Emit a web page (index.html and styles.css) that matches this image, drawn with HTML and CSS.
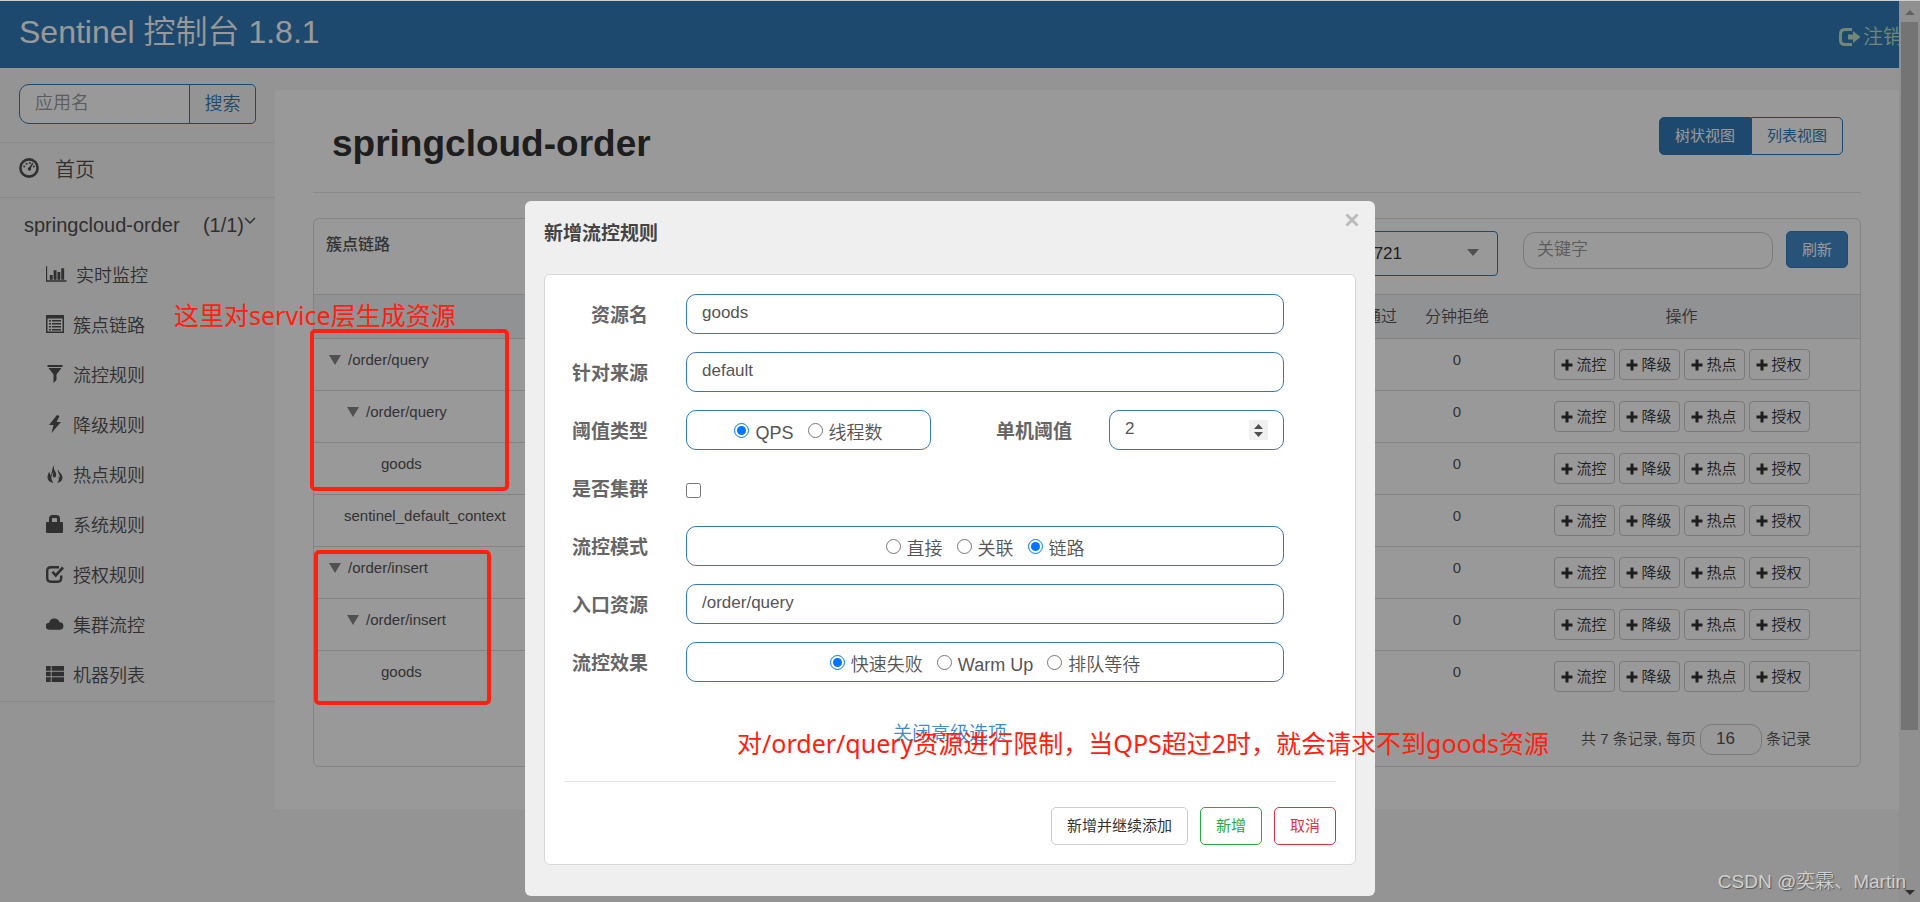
FILE: index.html
```html
<!DOCTYPE html>
<html lang="zh-CN">
<head>
<meta charset="utf-8">
<title>Sentinel 控制台</title>
<link rel="stylesheet" href="styles.css">
</head>
<body>
<svg class="sprite" aria-hidden="true">
  <symbol id="i-plus" viewBox="0 0 12 12"><path d="M4.5 .5h3v4h4v3h-4v4h-3v-4h-4v-3h4z"/></symbol>
  <symbol id="i-tree" viewBox="0 0 12 10"><path d="M0 0h12L6 10z"/></symbol>
  <symbol id="i-dash" viewBox="0 0 20 20"><circle cx="10" cy="10" r="8.6" fill="none" stroke="currentColor" stroke-width="2.6"/><circle cx="5.200" cy="8.600" r="1"/><circle cx="7.500" cy="5.800" r="1"/><circle cx="10.800" cy="4.900" r="1"/><circle cx="14.900" cy="8.600" r="1"/><path d="M13.200 4.800l1.200.6-2.500 4.600a1.700 1.700 0 1 1-1.600-.8z"/></symbol>
  <symbol id="i-stats" viewBox="0 0 22 18"><path d="M0 1h1.200v14.500H21.500V17H0zM4 10h3v5H4zM8 5h3v10H8zM12 7h3v8h-3zM16 3h3v12h-3z"/></symbol>
  <symbol id="i-list" viewBox="0 0 18 18"><path fill-rule="evenodd" d="M0 0h18v18H0zM1.500 3.500v13h15v-13zM3 5h2v1.500H3zM6 5h9v1.500H6zM3 8h2v1.500H3zM6 8h9v1.500H6zM3 11h2v1.500H3zM6 11h9v1.500H6zM3 14h2v1.500H3zM6 14h9v1.500H6z"/></symbol>
  <symbol id="i-filter" viewBox="0 0 18 18"><path d="M1.500 0h15v2H1.500zM2.500 3h13l-5 6.500V15l-3 3V9.500z"/></symbol>
  <symbol id="i-flash" viewBox="0 0 18 18"><path d="M11 0L3 10h4.500l-2 8L15 7h-4.500l3-6z"/></symbol>
  <symbol id="i-fire" viewBox="0 0 18 18"><path d="M8.500 0c-1.500 3 0 5 1 7s1 5.500-1 5.500S6.500 10 7.500 7.500C5 9.500 4.500 14 7.500 18 4 17.500 1.500 15.500 1.500 12c0-2 1-3 1.500-5 1.200 1 1.200 2.500 1.500 3.500C7 7 5 3.500 8.500 0zM12 4c0 3 4.500 4.500 4.500 8.500 0 3-2 5-5.500 5.500 2.500-2.500 2-5 1.300-6.800.9.300 1.400.8 1.700 1.600C14.500 10 11 7.500 12 4z"/></symbol>
  <symbol id="i-lock" viewBox="0 0 18 18"><path fill-rule="evenodd" d="M0 8q0-1 1-1h2V3.500Q3 0 6.500 0h4Q14 0 14 3.500V7h2q1 0 1 1v9q0 1-1 1H1q-1 0-1-1zM6 7h5V4q0-1-1-1H7Q6 3 6 4z"/></symbol>
  <symbol id="i-check" viewBox="0 0 18 18"><path fill="none" stroke="currentColor" stroke-width="2.400" d="M13 2.200H5Q1.200 2.200 1.200 6v7q0 3.700 3.800 3.700h6.500q3.700 0 3.700-3.700v-2.500"/><path d="M5.500 7.500L7.500 6 9.700 8.500 16 1.500l2 2-8.300 9z"/></symbol>
  <symbol id="i-cloud" viewBox="0 0 20 13"><path d="M4 13a4 4 0 0 1-.5-8A6 6 0 0 1 15 4.500a4.300 4.300 0 0 1 1 8.500z"/></symbol>
  <symbol id="i-rows" viewBox="0 0 19 17"><path d="M0 0h5v5H0zM6 0h13v5H6zM0 6h5v5H0zM6 6h13v5H6zM0 12h5v5H0zM6 12h13v5H6z"/></symbol>
  <symbol id="i-out" viewBox="0 0 22 18"><path fill="none" stroke="currentColor" stroke-width="3" d="M13 1.500H6Q1.500 1.500 1.500 6v6q0 4.500 4.500 4.500h7"/><path d="M9 6.500h5V3l7.500 6-7.500 6v-3.500H9z"/></symbol>
</svg>

<div class="window">
  <div class="page">
    <header class="topbar">
      <h1>Sentinel 控制台 1.8.1</h1>
      <a href="#" class="logout"><svg class="ico-out"><use href="#i-out"/></svg>注销</a>
    </header>
    <div class="body">
      <nav class="sidebar">
        <form class="search">
          <input type="text" placeholder="应用名" aria-label="应用名">
          <button type="button">搜索</button>
        </form>
        <a href="#" class="home"><svg class="ico-home"><use href="#i-dash"/></svg>首页</a>
        <a href="#" class="app"><span>springcloud-order</span><span class="count">(1/1)</span><svg class="chev" viewBox="0 0 12 8"><path d="M1 1l5 5 5-5" fill="none" stroke="currentColor" stroke-width="1.500"/></svg></a>
        <ul class="menu">
          <li><a href="#"><svg class="wide"><use href="#i-stats"/></svg>实时监控</a></li>
          <li><a href="#"><svg><use href="#i-list"/></svg>簇点链路</a></li>
          <li><a href="#"><svg><use href="#i-filter"/></svg>流控规则</a></li>
          <li><a href="#"><svg><use href="#i-flash"/></svg>降级规则</a></li>
          <li><a href="#"><svg><use href="#i-fire"/></svg>热点规则</a></li>
          <li><a href="#"><svg><use href="#i-lock"/></svg>系统规则</a></li>
          <li><a href="#"><svg><use href="#i-check"/></svg>授权规则</a></li>
          <li><a href="#"><svg><use href="#i-cloud"/></svg>集群流控</a></li>
          <li><a href="#"><svg><use href="#i-rows"/></svg>机器列表</a></li>
        </ul>
      </nav>
      <main class="main">
        <div class="heading">
          <h2>springcloud-order</h2>
          <div class="views"><button type="button" class="on">树状视图</button><button type="button">列表视图</button></div>
        </div>
        <section class="card">
          <div class="card-head">
            <strong>簇点链路</strong>
            <div class="select-box">
              <select aria-label="机器"><option>192.168.56.1:8721</option></select>
              <svg class="caret" viewBox="0 0 12 7"><path d="M0 0h12L6 7z"/></svg>
            </div>
            <input type="text" class="keyword" placeholder="关键字" aria-label="关键字">
            <button type="button" class="refresh">刷新</button>
          </div>
          <table>
            <colgroup><col><col class="c-num"><col class="c-num"><col class="c-act"></colgroup>
            <thead><tr><th>资源名</th><th>分钟通过</th><th>分钟拒绝</th><th>操作</th></tr></thead>
            <tbody id="rows"></tbody>
          </table>
          <div class="pager">共 7 条记录, <label for="size">每页</label><input id="size" type="text" value="16">条记录</div>
        </section>
      </main>
    </div>
  </div>
  <div class="scrollbar"><svg viewBox="0 0 10 5"><path d="M5 0l5 5H0z"/></svg><div class="thumb"></div><svg class="down" viewBox="0 0 10 5"><path d="M0 0h10L5 5z"/></svg></div>
</div>

<div class="overlay">
  <div class="dialog" role="dialog" aria-labelledby="dlg-title">
    <div class="dialog-head">
      <h3 id="dlg-title">新增流控规则</h3>
      <button type="button" class="close" aria-label="关闭"><svg viewBox="0 0 14 14"><path d="M1.500 1.500l11 11M12.500 1.500l-11 11"/></svg></button>
    </div>
    <form class="panel">
      <div class="fields">
        <label class="name" for="res">资源名</label><input class="box" id="res" type="text" value="goods">
        <label class="name" for="src">针对来源</label><input class="box" id="src" type="text" value="default">
        <span class="name">阈值类型</span>
        <div class="split">
          <div class="box radios"><label><input type="radio" name="grade" checked>QPS</label><label><input type="radio" name="grade">线程数</label></div>
          <label class="name" for="cnt">单机阈值</label>
          <div class="spin"><input class="box" id="cnt" type="number" value="2"><svg viewBox="0 0 19 20"><path fill="#f0f0f0" d="M0 0h19v20H0z"/><path fill="#505050" d="M9.500 4l4.500 5H5zM5 12h9l-4.500 5z"/></svg></div>
        </div>
        <label class="name" for="cluster">是否集群</label><div class="tick"><input type="checkbox" id="cluster"></div>
        <span class="name">流控模式</span>
        <div class="box radios"><label><input type="radio" name="mode">直接</label><label><input type="radio" name="mode">关联</label><label><input type="radio" name="mode" checked>链路</label></div>
        <label class="name" for="entry">入口资源</label><input class="box" id="entry" type="text" value="/order/query">
        <span class="name">流控效果</span>
        <div class="box radios"><label><input type="radio" name="effect" checked>快速失败</label><label><input type="radio" name="effect">Warm Up</label><label><input type="radio" name="effect">排队等待</label></div>
      </div>
      <a href="#" class="advanced">关闭高级选项</a>
      <div class="actions">
        <button type="button">新增并继续添加</button><button type="button" class="ok">新增</button><button type="button" class="cancel">取消</button>
      </div>
    </form>
  </div>
</div>

<div class="mark mark-a"></div>
<div class="mark mark-b"></div>
<p class="note note-a">这里对service层生成资源</p>
<p class="note note-b">对/order/query资源进行限制，当QPS超过2时，就会请求不到goods资源</p>
<p class="watermark">CSDN @奕霖、Martin</p>
<script src="rows.js"></script>
</body>
</html>
```
FILE: styles.css
```css
* { box-sizing: border-box; }
body { margin: 0; height: 100vh; overflow: hidden; border-top: 1px solid #cfcfcf; background: #f7f7f7; color: #555; font: 16px/24px "Liberation Sans", "Noto Sans CJK SC", sans-serif; }
h1, h2, h3, p, ul { margin: 0; padding: 0; }
ul { list-style: none; }
a { color: inherit; text-decoration: none; }
input, button, select { font: inherit; color: inherit; margin: 0; }
button { padding: 0; background: #fff; }
svg { display: block; flex: none; fill: currentColor; }
.sprite { position: absolute; width: 0; height: 0; }

.window { display: flex; height: 100%; }
.page { flex: 1; min-width: 0; overflow: hidden; }
.topbar { display: flex; justify-content: space-between; height: 67px; padding-left: 19px; background: #337ab7; color: #fff; }
.topbar h1 { font-size: 32px; font-weight: 350; line-height: 62px; }
.logout { display: flex; align-items: center; gap: 2px; margin: 4px -4px 0 0; color: #bfe3c4; font-size: 20px; font-weight: 350; }
.ico-out { width: 22px; height: 18px; }

.body { display: flex; align-items: flex-start; }
.sidebar { width: 275px; flex: none; border-bottom: 1px solid #e7e7e7; color: #505050; }
.search { display: flex; padding: 16px 19px 18px; border-bottom: 1px solid #e7e7e7; font-size: 18px; font-weight: 350; }
.search input { flex: 1; min-width: 0; height: 40px; padding: 0 15px 2px; border: 1px solid #337ab7; border-radius: 10px 0 0 10px; background: #fff; }
.search button { width: 67px; margin-left: -1px; border: 1px solid #337ab7; border-radius: 0 5px 5px 0; color: #337ab7; background: none; }
::placeholder { color: #999; opacity: 1; font-weight: 350; }
.home { display: flex; align-items: center; gap: 16px; height: 55px; padding-left: 19px; border-bottom: 1px solid #e7e7e7; font-size: 20px; font-weight: 350; }
.ico-home { width: 20px; height: 20px; margin-bottom: 4px; }
.app { display: flex; align-items: center; height: 53px; padding: 0 19px 0 24px; font-size: 20px; }
.count { margin-left: auto; }
.chev { width: 12px; height: 8px; margin-bottom: 8px; }
.menu a { display: flex; align-items: center; gap: 9px; height: 50px; padding-left: 46px; font-size: 18px; font-weight: 350; }
.menu svg { width: 18px; height: 18px; margin-bottom: 4px; }
.menu .wide { width: 21px; }

.main { flex: 1; min-width: 0; margin-top: 22px; padding: 0 38px 42px; background: #fff; }
.heading { display: flex; justify-content: space-between; align-items: flex-start; height: 103px; padding: 27px 18px 0 19px; border-bottom: 1px solid #e7e7e7; }
.heading h2 { color: #333; font-size: 37px; line-height: 54px; }
.views { display: flex; font-size: 15px; }
.views button { width: 92px; height: 38px; border: 1px solid #337ab7; color: #337ab7; border-radius: 0 5px 5px 0; }
.views .on { background: #337ab7; color: #fff; border-radius: 5px 0 0 5px; }

.card { margin-top: 25px; border: 1px solid #dadada; border-radius: 6px; }
.card-head { display: flex; align-items: flex-start; height: 75px; padding: 12px; }
.card-head strong { flex: 1; font-size: 16px; line-height: 28px; font-weight: 500; }
.select-box { position: relative; width: 260px; margin-right: 25px; }
.select-box select { width: 100%; height: 45px; padding: 0 95px 0 0; appearance: none; text-align: right; text-align-last: right; border: 1px solid #337ab7; border-radius: 4px; background: #fff; color: #333; font-size: 17px; }
.caret { position: absolute; right: 19px; top: 18px; width: 12px; height: 7px; fill: #888; }
.keyword { width: 250px; height: 37px; margin: 1px 13px 0 0; padding: 0 13px 2px; border: 1px solid #ccc; border-radius: 12px; background: #fff; font-size: 17px; }
.refresh { width: 62px; height: 37px; border: 1px solid #357ebd; border-radius: 5px; background: #428bca; color: #fff; font-size: 15px; }
table { width: 100%; border-collapse: collapse; table-layout: fixed; font-size: 15px; }
.c-num { width: 92px; }
.c-act { width: 357px; }
th { height: 44px; padding: 0; border: solid #dadada; border-width: 1px 0; background: #f1f3f6; font-size: 16px; font-weight: 350; }
td { height: 52px; padding: 10px 0; vertical-align: top; text-align: center; border-bottom: 1px solid #dadada; line-height: 22px; }
tbody tr:last-child td { border-bottom: 0; }
td:first-child { text-align: left; }
.node { display: flex; align-items: center; gap: 7px; padding-left: 15px; }
.node svg { width: 12px; height: 10px; fill: #888; }
.depth-1 { padding-left: 33px; }
.plain-0 { padding-left: 30px; }
.plain-2 { padding-left: 67px; }
.ops { display: flex; justify-content: center; gap: 4px; }
.ops button { display: flex; align-items: center; justify-content: center; gap: 3px; width: 61px; height: 31px; border: 1px solid #ccc; border-radius: 4px; color: #333; font-size: 15px; font-weight: 350; }
.ops svg { width: 12px; height: 12px; }
.pager { display: flex; align-items: center; justify-content: flex-end; gap: 4px; padding: 21px 49px 11px 0; font-size: 15px; font-weight: 350; }
.pager input { width: 62px; height: 31px; padding: 0 15px; border: 1px solid #ccc; border-radius: 12px; background: #fff; font-size: 17px; }

.scrollbar { display: flex; flex-direction: column; align-items: center; width: 21px; padding: 9px 0 7px; background: #f1f1f1; color: #a3a3a3; }
.scrollbar svg { width: 10px; height: 5px; }
.scrollbar .down { margin-top: auto; color: #505050; }
.thumb { flex: 0 0 80%; width: 17px; margin-top: 7px; background: #c1c1c1; }

.overlay { position: absolute; inset: 1px 0 0; display: flex; justify-content: center; align-items: flex-start; padding: 200px 20px 0 0; background: rgba(0, 0, 0, .4); }
.dialog { width: 850px; padding: 0 19px 31px; border-radius: 6px; background: #efefef; }
.dialog-head { display: flex; justify-content: space-between; align-items: flex-start; height: 73px; }
.dialog-head h3 { color: #444; font-size: 19px; line-height: 66px; }
.close { margin: 12px -3px 0 0; border: 0; background: none; color: #bbb; }
.close svg { width: 14px; height: 14px; fill: none; stroke: currentColor; stroke-width: 3; }
.panel { padding: 19px; border: 1px solid #d8d8d8; border-radius: 6px; background: #fff; }
.fields { display: grid; grid-template-columns: 84px 1fr; gap: 18px 38px; padding-right: 52px; font-size: 17px; }
.name { padding-top: 4px; color: #666; font-size: 19px; font-weight: 700; line-height: 36px; text-align: right; white-space: nowrap; }
.box { display: block; width: 100%; height: 40px; padding: 0 15px 2px; border: 1px solid #337ab7; border-radius: 10px; background: #fff; }
.radios { display: flex; justify-content: center; gap: 14px; padding: 5px 0 0; font-size: 18px; font-weight: 350; }
.radios label { display: flex; align-items: center; gap: 6px; }
.radios input { width: 15px; height: 15px; margin-bottom: 4px; }
.split { display: grid; grid-template-columns: 245px 1fr 175px; }
.split .name { padding-right: 37px; }
.spin { position: relative; }
.spin input { appearance: textfield; }
.spin svg { position: absolute; right: 16px; top: 10px; width: 19px; height: 20px; }
.tick { display: flex; align-items: center; padding-top: 4px; }
.tick input { width: 15px; height: 15px; }
.advanced { display: block; width: max-content; margin: 39px auto 34px; color: #428bca; font-size: 19px; font-weight: 350; line-height: 26px; }
.actions { display: flex; justify-content: flex-end; gap: 12px; padding-top: 25px; border-top: 1px solid #e5e5e5; }
.actions button { height: 38px; padding: 0 15px; border: 1px solid #ccc; border-radius: 5px; color: #333; font-size: 15px; }
.actions .ok { border-color: #28a745; color: #28a745; }
.actions .cancel { border-color: #dc3545; color: #dc3545; }

.mark { position: absolute; border: 4px solid #ff2010; border-radius: 5px; }
.mark-a { left: 310px; top: 329px; width: 199px; height: 162px; }
.mark-b { left: 314px; top: 550px; width: 177px; height: 155px; }
.note { position: absolute; color: #ff2010; font: 25px/36px "Noto Sans", "Noto Sans CJK SC", sans-serif; white-space: nowrap; }
.note-a { left: 174px; top: 297px; }
.note-b { left: 737px; top: 725px; }
.watermark { position: absolute; right: 14px; bottom: 6px; color: #d0d0d0; font-size: 19px; font-weight: 350; line-height: 28px; text-shadow: 1px 1px 1px #555; }
```
FILE: rows.js
```js
const rows = [
  ["/order/query", "depth-0", true],
  ["/order/query", "depth-1", true],
  ["goods", "plain-2", false],
  ["sentinel_default_context", "plain-0", false],
  ["/order/insert", "depth-0", true],
  ["/order/insert", "depth-1", true],
  ["goods", "plain-2", false]
];
const ops = ["流控", "降级", "热点", "授权"];
document.getElementById("rows").innerHTML = rows.map(([name, cls, parent]) => `
  <tr>
    <td><div class="node ${cls}">${parent ? '<svg><use href="#i-tree"/></svg>' : ""}${name}</div></td>
    <td>0</td>
    <td>0</td>
    <td><div class="ops">${ops.map(o => `<button type="button"><svg><use href="#i-plus"/></svg>${o}</button>`).join("")}</div></td>
  </tr>`).join("");
```
